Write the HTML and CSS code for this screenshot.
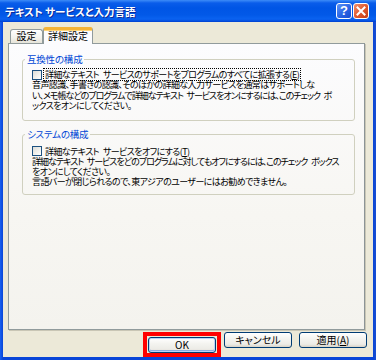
FILE: index.html
```html
<!DOCTYPE html>
<html lang="ja">
<head>
<meta charset="utf-8">
<link rel="stylesheet" href="styles.css">
</head>
<body>
<div class="window">
  <div class="titlebar">
    <span class="title">テキスト サービスと入力言語</span>
    <span class="tb-btn help">?</span>
    <span class="tb-btn close">
      <svg width="14" height="14" viewBox="0 0 14 14"><path d="M3.5 3.5 L10.5 10.5 M10.5 3.5 L3.5 10.5" stroke="#fff" stroke-width="2" stroke-linecap="square"/></svg>
    </span>
  </div>
  <div class="client">
    <div class="tabs">
      <div class="tab">設定</div>
      <div class="tab active">詳細設定</div>
    </div>
    <div class="panel">
      <fieldset class="group g1">
        <legend>互換性の構成</legend>
        <div class="check-row"><span class="checkbox"></span><span class="check-label focused">詳細なテキスト サービスのサポートをプログラムのすべてに拡張する(<u>E</u>)</span></div>
        <p class="desc">音声認識、手書きの認識、そのほかの詳細な入力サービスを通常はサポートしな<br><span class="tight">い、メモ帳などのプログラムで詳細なテキスト サービスをオンにするには、このチェック ボ</span><br>ックスをオンにしてください。</p>
      </fieldset>
      <fieldset class="group g2">
        <legend>システムの構成</legend>
        <div class="check-row"><span class="checkbox"></span><span class="check-label">詳細なテキスト サービスをオフにする(<u>T</u>)</span></div>
        <p class="desc"><span class="tight">詳細なテキスト サービスをどのプログラムに対してもオフにするには、このチェック ボックス</span><br>をオンにしてください。<br>言語バーが閉じられるので、東アジアのユーザーにはお勧めできません。</p>
      </fieldset>
    </div>
    <div class="buttons">
      <div class="highlight"><button class="btn default">OK</button></div>
      <button class="btn cancel">キャンセル</button>
      <button class="btn apply">適用(<u>A</u>)</button>
    </div>
  </div>
</div>
</body>
</html>
```
FILE: styles.css
```css
* { box-sizing: border-box; }
html, body { margin: 0; padding: 0; }
body {
  width: 376px;
  height: 360px;
  overflow: hidden;
  background: #ECE9D8;
  font-family: "Noto Sans CJK JP", "Noto Sans", sans-serif;
  font-size: 10px;
  font-feature-settings: "palt";
  color: #000;
}
.window {
  width: 376px;
  height: 360px;
  display: flex;
  flex-direction: column;
  background: linear-gradient(to right, #1860F0 0, #0845D8 3px, #0845D8 373px, #1A4FD0 376px);
}
.titlebar {
  height: 22px;
  flex: none;
  display: flex;
  align-items: center;
  padding: 0 7px 0 5px;
  gap: 1px;
  color: #fff;
  background: linear-gradient(to bottom, #3D8CF8 0, #0A5DEA 3px, #0055E5 8px, #0259E8 15px, #0A62F0 19px, #0450E0 21px, #003DCC 22px);
}
.title {
  flex: 1;
  font-weight: bold;
  font-size: 10.5px;
  line-height: 12px;
  white-space: nowrap;
  text-shadow: 1px 1px 0 #0A2A9A;
  padding-top: 1px;
}
.tb-btn {
  width: 16px;
  height: 16px;
  border: 1px solid #fff;
  border-radius: 3px;
  display: flex;
  align-items: center;
  justify-content: center;
}
.help {
  background: linear-gradient(135deg, #5C94F8 0%, #2A64E4 55%, #1A4CD0 100%);
  font-family: "Liberation Sans", Arial, sans-serif;
  font-weight: bold;
  font-size: 13px;
  line-height: 14px;
}
.close {
  background: linear-gradient(135deg, #F09070 0%, #E05A30 50%, #C23C14 100%);
}
.client {
  flex: 1;
  margin: 0 3px 3px;
  background: #ECE9D8;
  display: flex;
  flex-direction: column;
  padding: 5px 8px 0 5px;
}
.tabs {
  height: 17px;
  display: flex;
  align-items: flex-end;
  padding-left: 2px;
}
.tab {
  height: 14px;
  margin-bottom: 1px;
  padding: 0 4px;
  width: 33px;
  border: 1px solid #919B9C;
  border-bottom: none;
  border-radius: 3px 3px 0 0;
  background: linear-gradient(to bottom, #FFFFFF, #F3F2EC 60%, #E6E4DA);
  font-size: 10px;
  line-height: 12px;
  text-align: center;
  white-space: nowrap;
}
.tab.active {
  position: relative;
  z-index: 1;
  width: 50px;
  height: 17px;
  margin-bottom: 0;
  border-top: 3px solid #F5B335;
  background: #FCFCFE;
  line-height: 12px;
  box-shadow: inset 0 1px 0 #FFD57A;
}
.panel {
  height: 287px;
  margin-top: -1px;
  border: 1px solid #919B9C;
  border-right-color: #8C9496;
  box-shadow: 1px 1px 0 #C9C6B5;
  background: linear-gradient(to bottom, #FCFCFE 0%, #F7F6F2 60%, #F4F3EE 100%);
  padding: 10px 9px 0 13px;
  flex: none;
  font-size: 9px;
  letter-spacing: -0.6px;
  word-spacing: 2.5px;
}
.group {
  margin: 0;
  border: 1px solid #D0D0BF;
  border-radius: 3px;
  padding: 4px 8px 8px 9px;
  min-width: 0;
}
.group legend {
  color: #0046D5;
  font-size: 9.5px;
  letter-spacing: -0.2px;
  line-height: 11px;
  padding: 0 2px;
  margin-left: -7px;
}
.g2 {
  margin-top: 8px;
  padding-top: 6px;
  padding-bottom: 7px;
}
.check-row {
  height: 11px;
  display: flex;
  align-items: center;
  white-space: nowrap;
}
.checkbox {
  width: 10px;
  height: 10px;
  flex: none;
  border: 1px solid #1C5180;
  background: linear-gradient(135deg, #DCDCD7 0%, #F2F2EE 60%, #FFFFFF 100%);
  margin-right: 2px;
}
.check-label {
  line-height: 11px;
  padding: 0 1px;
}
.check-label.focused {
  outline: 1px dotted #000;
  outline-offset: 0;
}
.desc {
  margin: 0;
  line-height: 10.5px;
  white-space: nowrap;
}
.desc .tight { letter-spacing: -1px; }
.g2 .desc { line-height: 10.2px; }
.buttons {
  flex: 1;
  display: flex;
  justify-content: flex-end;
  align-items: flex-start;
  padding-top: 2px;
  padding-right: 6px;
  margin-right: -8px;
}
.highlight {
  border: 4px solid #FF0000;
  padding: 1px 1px 0;
}
.btn {
  display: block;
  width: 68px;
  height: 16px;
  padding: 0;
  border: 1px solid #003C74;
  border-radius: 3px;
  background: linear-gradient(to bottom, #FFFFFF 0%, #F4F4F0 40%, #ECEBE6 80%, #D8D2C6 100%);
  font-family: "Noto Sans CJK JP", "Noto Sans", sans-serif;
  font-feature-settings: "palt";
  font-size: 10px;
  line-height: 14px;
  color: #000;
}
.btn.default {
  box-shadow: inset 0 0 0 1px #BCD4F6, inset 0 -1px 0 1px #89ADE4;
}
.cancel { margin-left: 3px; }
.apply { margin-left: 7px; }
```
